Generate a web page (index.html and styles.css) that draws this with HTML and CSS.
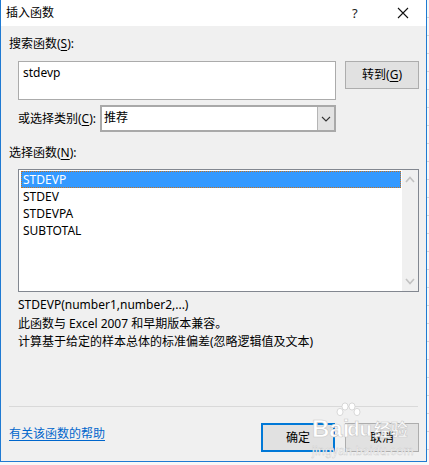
FILE: index.html
```html
<!DOCTYPE html>
<html lang="zh-CN">
<head>
<meta charset="utf-8">
<title>插入函数</title>
<link rel="stylesheet" href="styles.css">
</head>
<body>
<div class="screen">
  <div class="dialog">
    <div class="titlebar">
      <span class="title">插入函数</span>
      <span class="help">?</span>
      <span class="close">
        <svg width="12" height="12" viewBox="0 0 12 12"><path d="M1 1 L11 11 M11 1 L1 11" stroke="#111" stroke-width="1.1" fill="none"/></svg>
      </span>
    </div>
    <div class="content">
      <div class="section-label">搜索函数(<u>S</u>):</div>
      <div class="search-row">
        <div class="textbox">stdevp</div>
        <div class="btn">转到(<u>G</u>)</div>
      </div>
      <div class="cat-row">
        <div class="cat-label">或选择类别(<u>C</u>):</div>
        <div class="select">
          <span class="select-value">推荐</span>
          <span class="select-arrow">
            <svg width="10" height="6" viewBox="0 0 10 6"><path d="M1 1 L5 5 L9 1" stroke="#333" stroke-width="1.1" fill="none"/></svg>
          </span>
        </div>
      </div>
      <div class="section-label second">选择函数(<u>N</u>):</div>
      <div class="listbox">
        <div class="items">
          <div class="item selected">STDEVP</div>
          <div class="item">STDEV</div>
          <div class="item">STDEVPA</div>
          <div class="item">SUBTOTAL</div>
        </div>
        <div class="scrollbar">
          <svg width="10" height="7" viewBox="0 0 10 7"><path d="M1 6 L5 1.5 L9 6" stroke="#c2c2c2" stroke-width="1.6" fill="none"/></svg>
          <svg width="10" height="7" viewBox="0 0 10 7"><path d="M1 1 L5 5.5 L9 1" stroke="#c2c2c2" stroke-width="1.6" fill="none"/></svg>
        </div>
      </div>
      <div class="desc">
        <div class="syntax">STDEVP(number1,number2,...)</div>
        <div class="line">此函数与 Excel 2007 和早期版本兼容。</div>
        <div class="line">计算基于给定的样本总体的标准偏差(忽略逻辑值及文本)</div>
      </div>
      <div class="separator"></div>
      <div class="footer">
        <a class="help-link" href="#">有关该函数的帮助</a>
        <div class="buttons">
          <div class="btn default">确定</div>
          <div class="btn">取消</div>
        </div>
      </div>
    </div>
    <div class="watermark">
      <div class="wm-top"><span>Bai</span><svg class="paw" width="26" height="24" viewBox="0 0 26 24"><g fill="#fff" stroke="#cfcfcf" stroke-width="0.8"><ellipse cx="5" cy="10" rx="3" ry="3.6"/><ellipse cx="10" cy="4.5" rx="3" ry="3.6"/><ellipse cx="17" cy="4.5" rx="3" ry="3.6"/><ellipse cx="22" cy="10" rx="3" ry="3.6"/></g></svg><span class="du">du</span><span class="jy">经验</span></div>
      <div class="wm-url">jingyan.baidu.com</div>
    </div>
  </div>
</div>
</body>
</html>
```
FILE: styles.css
```css
html, body {
  margin: 0;
  padding: 0;
}
body {
  width: 429px;
  height: 465px;
  overflow: hidden;
  font-family: "Segoe UI", "Noto Sans", "Noto Sans CJK SC", sans-serif;
  font-size: 12px;
  color: #000;
  background-color: #f7f7f7;
  background-image: repeating-linear-gradient(to bottom, transparent 0, transparent 17px, #d4d4d4 17px, #d4d4d4 18px);
}
.screen {
  width: 429px;
  height: 465px;
}
.dialog {
  position: relative;
  width: 425px;
  height: 461px;
  background: #f0f0f0;
  border: 1px solid #1f7ad2;
  border-top: none;
}
.titlebar {
  height: 26px;
  background: #fff;
  display: flex;
  align-items: center;
}
.title {
  margin-left: 5px;
  font-size: 12px;
  flex: 1;
  line-height: 16px;
}
.help {
  width: 20px;
  font-size: 13px;
  color: #222;
  margin-right: 25px;
}
.close {
  display: flex;
  width: 12px;
  margin-right: 17px;
}
.content {
  padding: 0 7px 0 8px;
}
.section-label {
  margin-top: 10px;
  line-height: 16px;
  height: 16px;
}
.section-label.second {
  margin-top: 13px;
}
u {
  text-decoration-thickness: 1px;
  text-underline-offset: 2px;
}
.search-row {
  display: flex;
  align-items: flex-start;
  margin-top: 9px;
  padding-left: 9px;
  gap: 9px;
}
.textbox {
  width: 308px;
  height: 37px;
  background: #fff;
  border: 1px solid #ababab;
  padding: 0 4px;
  line-height: 22px;
}
.btn {
  box-sizing: border-box;
  width: 74px;
  height: 28px;
  background: #e1e1e1;
  border: 1px solid #adadad;
  display: flex;
  align-items: center;
  justify-content: center;
  line-height: 16px;
}
.btn.default {
  border: 2px solid #0078d7;
}
.cat-row {
  display: flex;
  align-items: center;
  margin-top: 5px;
  padding-left: 9px;
  height: 27px;
}
.cat-label {
  width: 82px;
  line-height: 16px;
}
.select {
  box-sizing: border-box;
  width: 236px;
  height: 27px;
  border: 2px solid #a9a9a9;
  background: #fff;
  display: flex;
}
.select-value {
  flex: 1;
  padding-left: 2px;
  line-height: 22px;
}
.select-arrow {
  width: 16px;
  background: #e3e3e3;
  border-left: 1px solid #b5b5b5;
  display: flex;
  align-items: center;
  justify-content: center;
}
.listbox {
  box-sizing: border-box;
  margin-top: 8px;
  margin-left: 9px;
  width: 401px;
  height: 123px;
  border: 1px solid #828790;
  background: #fff;
  display: flex;
}
.items {
  flex: 1;
  padding: 1px 1px 0 2px;
}
.item {
  height: 17px;
  line-height: 17px;
  padding-left: 2px;
}
.item.selected {
  background: #3399ff;
  color: #fff;
  outline: 1px dotted #c5721e;
  outline-offset: -1px;
}
.scrollbar {
  width: 16px;
  background: #f0f0f0;
  display: flex;
  flex-direction: column;
  justify-content: space-between;
  align-items: center;
  padding: 6px 0 6px;
}
.scrollbar svg {
  display: block;
}
.desc {
  margin-top: 4px;
  padding-left: 9px;
}
.syntax {
  line-height: 18px;
}
.line {
  line-height: 18px;
  margin-top: 1px;
}
.line + .line {
  margin-top: 0;
}
.separator {
  margin-top: 55px;
  height: 1px;
  background: #d9d9d9;
  width: 409px;
}
.footer {
  display: flex;
  justify-content: space-between;
  align-items: flex-start;
  margin-top: 16px;
}
.help-link {
  color: #0066cc;
  text-decoration: underline;
  text-underline-offset: 2px;
  margin-top: 3px;
  line-height: 16px;
}
.buttons {
  display: flex;
  gap: 10px;
  margin-right: 0;
}
.buttons .btn {
  height: 29px;
}
.watermark {
  position: absolute;
  left: 311px;
  top: 410px;
  color: #fff;
  pointer-events: none;
  font-family: "Liberation Sans", sans-serif;
}
.wm-top {
  display: flex;
  align-items: flex-end;
  height: 32px;
  font-size: 24px;
  font-weight: bold;
  -webkit-text-stroke: 0.6px #c9c9c9;
  line-height: 26px;
}
.paw {
  margin-left: -14px;
  margin-bottom: 16px;
}
.du {
  margin-left: -14px;
  font-size: 20px;
}
.jy {
  font-family: "Noto Sans CJK SC", sans-serif;
  font-size: 17px;
  margin-left: 2px;
  font-weight: bold;
}
.wm-url {
  font-size: 12px;
  -webkit-text-stroke: 0.4px #c9c9c9;
  margin-top: 2px;
  letter-spacing: 0.3px;
}
```
